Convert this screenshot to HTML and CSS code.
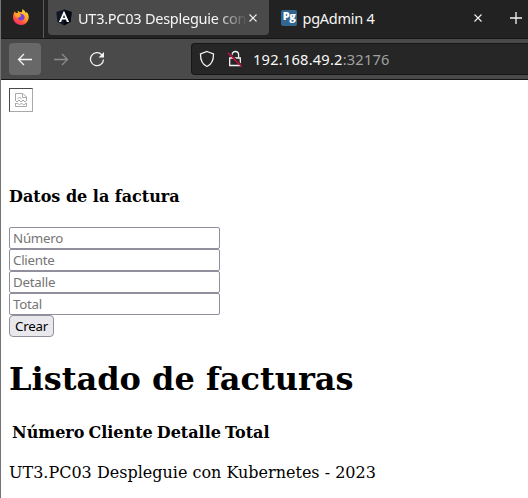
FILE: index.html
```html
<!DOCTYPE html>
<html lang="es">
<head>
<meta charset="utf-8">
<title>UT3.PC03 Despleguie con Kubernetes</title>
<link rel="stylesheet" href="styles.css">
</head>
<body>
<div class="window">
  <header class="tabs">
    <div class="pinned">
      <svg width="18" height="18" viewBox="0 0 18 18">
        <defs>
          <linearGradient id="fire" x1="0.8" y1="0" x2="0.2" y2="1"><stop offset="0" stop-color="#ffe63c"/><stop offset=".45" stop-color="#ff9a28"/><stop offset=".75" stop-color="#ff4a45"/><stop offset="1" stop-color="#ef2375"/></linearGradient>
        </defs>
        <path fill="url(#fire)" d="M2.8 3.2 4 5 6 4.700 5.500 2.600 7.500 4 10 4.200 10.400 1 13 3.300 13.600 4.800 15 4.200C17 6.500 17.300 10 16 12.500 14.500 15.500 12 17 9 17 4.500 17 1 13.500 1 9.300 1 7 1.700 5 2.800 3.200Z"/>
        <path fill="#7a42d8" d="M6.400 6.300C8.500 5 12.300 5.700 12.600 9c.1 2.200-1.500 3.700-3.600 3.600-2-.1-3.400-1.400-3.300-3L8.400 9 9 7.500Z"/>
        <path fill="#ffa32a" d="M2.500 6.500C4 5 5.500 4.800 8.200 6.300L9.300 7.300 7.200 8.500 6 10 4 9Z"/>
      </svg>
    </div>
    <div class="tab active">
      <svg class="fav" width="16" height="17" viewBox="0 0 16 17">
        <path fill="#111827" d="M8 .5 15.700 3 14.600 12.700 8 16.500 1.400 12.700.3 3Z"/>
        <path fill="#050914" d="M8 .5 15.700 3 14.600 12.700 8 16.500Z"/>
        <path fill="#fff" fill-rule="evenodd" d="M8 1.800 13.100 13H10.900L9.900 10.500H6.100L5.100 13H2.900ZM8 5.900 6.800 8.800H9.200Z"/>
      </svg>
      <span class="label clipped">UT3.PC03 Despleguie con</span>
      <svg class="close" width="8" height="8" viewBox="0 0 8 8"><path d="M.5.5l7 7M7.500.5l-7 7"/></svg>
    </div>
    <div class="tab second">
      <span class="pg">Pg</span>
      <span class="label">pgAdmin 4</span>
      <svg class="close" width="8" height="8" viewBox="0 0 8 8"><path d="M.5.5l7 7M7.500.5l-7 7"/></svg>
    </div>
    <svg class="plus" width="12" height="12" viewBox="0 0 12 12"><path d="M6 0v12M0 6h12"/></svg>
  </header>
  <nav class="toolbar">
    <div class="nav back"><svg width="16" height="16" viewBox="0 0 16 16"><path d="M15 8.500H1.500M7 3 1.500 8.500 7 14"/></svg></div>
    <div class="nav forward"><svg width="16" height="16" viewBox="0 0 16 16"><path d="M1 8.500h13.500M9 3 14.500 8.500 9 14"/></svg></div>
    <div class="nav"><svg width="16" height="16" viewBox="0 0 16 16"><path d="M12.800 3.800A6.500 6.500 0 1 0 14.500 8.500"/><path class="solid" d="M15 1v5.500H9.500Z"/></svg></div>
    <div class="url">
      <svg class="shield" width="16" height="18" viewBox="0 0 16 18"><path d="M8 1.500 14.500 4C14.600 10 13 14.300 8 16.500 3 14.300 1.400 10 1.500 4Z"/></svg>
      <svg class="lock" width="16" height="18" viewBox="0 0 16 18"><path d="M5 8V4.800a3.300 3.300 0 0 1 6.600 0V8M2.700 8h10.600v7.500H2.700Z"/><path class="gap" d="M2 2.500 15 15.500"/><path class="strike" d="M1 3 14.500 16.500"/></svg>
      <span class="address">192.168.49.2<span class="port">:32176</span></span>
    </div>
  </nav>
  <main>
    <div class="picture">
      <svg width="14" height="14" viewBox="0 0 14 14"><path d="M1.500 7V.5H9L12.500 4v3.500M8.500.5v4h4M1 7l2 2 2-2 2 2 2-2 2 2 2-2M1.500 10v3.500h11V10M1.500 11l2-1 2 2 2-2 2 2 3-2M3.500 6 5.500 4 7.500 6"/></svg>
    </div>
    <h3>Datos de la factura</h3>
    <form>
      <input placeholder="Número">
      <input placeholder="Cliente">
      <input placeholder="Detalle">
      <input placeholder="Total">
      <button type="button">Crear</button>
    </form>
    <h1>Listado de facturas</h1>
    <table><tr><th>Número</th><th>Cliente</th><th>Detalle</th><th>Total</th></tr></table>
    <p>UT3.PC03 Despleguie con Kubernetes - 2023</p>
  </main>
</div>
</body>
</html>
```
FILE: styles.css
```css
* { box-sizing: border-box; }
body { margin: 0; background: #fff; color: #000; font: 16px/19px "DejaVu Serif", serif; }
svg { display: block; flex: none; fill: none; stroke: #f4f4f4; stroke-width: 1.3; }
.window { width: 528px; height: 498px; overflow: hidden; border-left: 1px solid #747474; }
.tabs { display: flex; height: 39px; background: #222; border-bottom: 1px solid #161616; }
.pinned { flex: none; width: 43px; height: 38px; border-right: 1px solid #5b5b5b; padding: 8px 0 0 11px; }
.pinned svg, .fav { stroke: none; }
.tab { display: flex; flex: none; align-items: center; height: 35px; color: #f6f6f6; font: 14.5px/20px "Noto Sans", sans-serif; }
.active { width: 221px; margin-left: 4px; padding-left: 8px; background: #4a4a4a; border-radius: 0 0 4px 4px; }
.fav { margin-right: 6px; }
.label { white-space: nowrap; letter-spacing: -.25px; }
.clipped { width: 170px; overflow: hidden; -webkit-mask-image: linear-gradient(to right, #000 138px, transparent 170px); mask-image: linear-gradient(to right, #000 138px, transparent 170px); }
.close { stroke-width: 1.1; margin-left: 1px; }
.second { width: 213px; padding-left: 12px; }
.second .close { margin-left: auto; }
.pg { width: 16px; height: 16px; margin-right: 6px; border-radius: 2px; background: #326690; color: #fff; font: 800 11px/12px "Open Sans", sans-serif; text-align: center; letter-spacing: -.5px; }
.second .label { margin-left: -.5px; }
.plus { margin: 12px 0 0 28px; }
.toolbar { display: flex; height: 41px; padding: 4px 0 0 8px; background: #4a4a4a; border-bottom: 1px solid #161616; }
.nav { display: flex; flex: none; align-items: center; justify-content: center; width: 32px; height: 32px; margin-right: 4px; }
.back { background: #686868; border-radius: 4px; }
.forward svg { stroke: #8b8b8b; }
.solid { fill: #f4f4f4; stroke: none; }
.url { display: flex; align-items: center; width: 345px; height: 32px; margin-left: 74px; padding-left: 7px; flex: none; background: #262626; border: 1px solid #171717; border-right: 0; border-radius: 4px 0 0 4px; }
.lock { margin-left: 12px; }
.gap { stroke: #262626; }
.strike { stroke: #e00b42; }
.address { margin-left: 10px; color: #f8f8f8; font: 14.67px/20px "Noto Sans", sans-serif; letter-spacing: .2px; }
.port { color: #a0a0a0; }
main { padding: 8px; }
.picture { width: 24px; height: 24px; padding: 4px; border: 1px solid; border-color: #484848 #a9a9a9 #a9a9a9 #484848; }
.picture svg { stroke: #aaa; stroke-width: 1; }
h3 { margin: 75px 0 21px; font-size: 16px; line-height: 19px; }
form { display: flex; flex-direction: column; align-items: flex-start; }
input { display: block; width: 211px; height: 22px; padding: 0 3px; border: 1px solid #8f8f9d; border-radius: 2px; background: #fff; font: 13.33px/18px "Noto Sans", sans-serif; letter-spacing: -.25px; }
input::placeholder { color: #757575; opacity: 1; }
button { width: 45px; height: 22px; padding: 0; border: 1px solid #8f8f9d; border-radius: 4px; background: #e9e9ed; color: #000; font: 13.33px/18px "Noto Sans", sans-serif; letter-spacing: -.2px; }
h1 { margin: 23px 0 22px; font-size: 32px; line-height: 38px; }
table { border-spacing: 2px; }
th { padding: 1px; white-space: nowrap; }
p { margin: 18px 0 0; white-space: nowrap; }
```
